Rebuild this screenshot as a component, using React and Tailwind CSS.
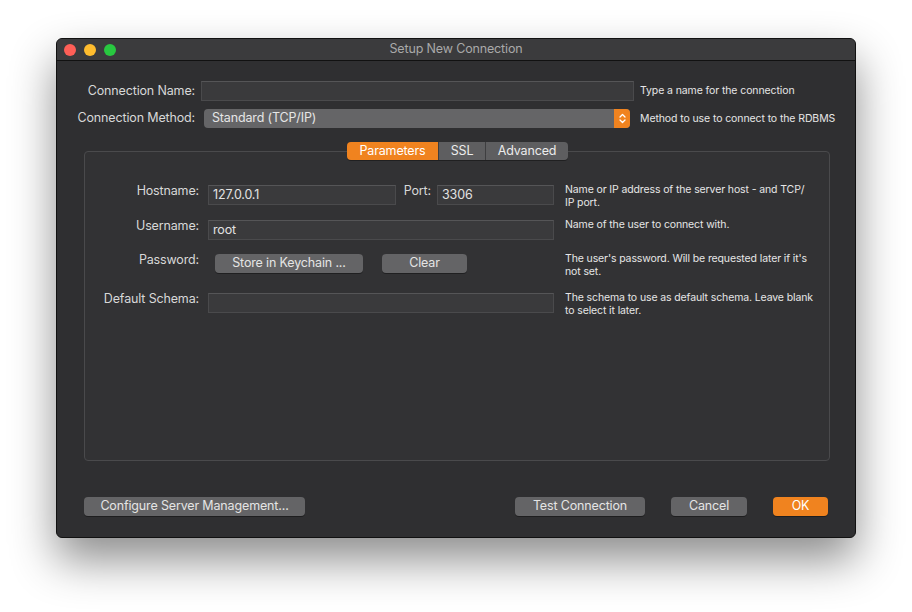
const Field = ({ className = "", value = "" }) => (
  <div
    className={`h-[20px] bg-[#3a3a3c] border border-[#4a4a4c] border-t-[#555557] flex items-center px-[4px] text-[12.5px] tracking-[-0.15px] text-[#e2e2e2] ${className}`}
  >
    {value}
  </div>
);

const Button = ({ children, className = "" }) => (
  <button
    className={`h-[19px] rounded-[4px] bg-[#646466] text-[12.5px] tracking-[-0.15px] leading-none text-[#e4e4e4] shadow-[0_1px_0_rgba(0,0,0,0.35)] flex items-center justify-center ${className}`}
  >
    {children}
  </button>
);

const Help = ({ children }) => (
  <div className="ml-[11px] w-[249px] -mt-[2px] text-[10.5px] tracking-[-0.12px] leading-[13px] text-[#e6e6e6]">
    {children}
  </div>
);

const Label = ({ children, className = "" }) => (
  <div className={`text-right text-[12.5px] tracking-[-0.15px] leading-[16px] text-[#d8d8d8] -mt-[2px] ${className}`}>
    {children}
  </div>
);

export default function App() {
  return (
    <div
      className="w-[912px] h-[612px] bg-white pt-[38px] pl-[56px]"
      style={{ fontFamily: "Inter, 'Noto Sans', sans-serif" }}
    >
      <div className="w-[800px] h-[500px] rounded-[6px] border border-[#111] bg-[#2f2f31] overflow-hidden shadow-[0_22px_45px_rgba(0,0,0,0.45)] flex flex-col">
        {/* Title bar */}
        <div className="h-[22px] flex-shrink-0 flex items-center bg-[#3b3b3d] border-b border-[#111]">
          <div className="flex items-center gap-[8px] pl-[7px]">
            <span className="w-[12px] h-[12px] rounded-full bg-[#fe5f57]" />
            <span className="w-[12px] h-[12px] rounded-full bg-[#febc2e]" />
            <span className="w-[12px] h-[12px] rounded-full bg-[#28c840]" />
          </div>
          <div className="flex-1 text-center text-[12.5px] tracking-[-0.15px] text-[#a9a9a9] pr-[59px]">
            Setup New Connection
          </div>
        </div>

        {/* Top rows */}
        <div className="pt-[20px] flex flex-col">
          <div className="flex items-center h-[20px]">
            <div className="w-[138px] text-right text-[12.5px] tracking-[-0.15px] text-[#d8d8d8]">Connection Name:</div>
            <Field className="ml-[6px] w-[433px]" />
            <div className="ml-[6px] text-[10.5px] tracking-[-0.1px] text-[#e6e6e6]">Type a name for the connection</div>
          </div>
          <div className="flex items-center h-[19px] mt-[8px]">
            <div className="w-[138px] text-right text-[12.5px] tracking-[-0.15px] text-[#d8d8d8]">Connection Method:</div>
            <div className="ml-[9px] w-[426px] h-[19px] rounded-[4px] bg-[#656567] flex items-center overflow-hidden">
              <span className="flex-1 pl-[8px] text-[12.5px] tracking-[-0.15px] text-[#e6e6e6]">Standard (TCP/IP)</span>
              <span className="w-[16px] h-full bg-[#f0831f] flex items-center justify-center">
                <svg width="9" height="13" viewBox="0 0 9 13" fill="none" stroke="#fff" strokeWidth="1.3" strokeLinecap="round" strokeLinejoin="round">
                  <path d="M2 5 L4.5 2.5 L7 5" />
                  <path d="M2 8 L4.5 10.5 L7 8" />
                </svg>
              </span>
            </div>
            <div className="ml-[10px] text-[10.5px] tracking-[-0.1px] text-[#e6e6e6]">Method to use to connect to the RDBMS</div>
          </div>
        </div>

        {/* Group box */}
        <div className="mt-[23px] ml-[27px] w-[746px] h-[310px] rounded-[4px] border border-[#4a4a4c] bg-[#323234] flex flex-col">
          <div className="flex justify-center -mt-[10px]">
            <div className="flex h-[18px] rounded-[4px] overflow-hidden text-[12.5px] tracking-[-0.15px] text-[#ececec] shadow-[0_1px_0_rgba(0,0,0,0.35)] ml-[1px]">
              <div className="w-[91px] bg-[#f0831f] text-white flex items-center justify-center">Parameters</div>
              <div className="w-[47px] bg-[#5e5e60] border-l border-[#3e3e40] flex items-center justify-center">SSL</div>
              <div className="w-[83px] bg-[#5e5e60] border-l border-[#3e3e40] flex items-center justify-center">Advanced</div>
            </div>
          </div>

          <div className="flex flex-col mt-[25px]">
            {/* Hostname */}
            <div className="flex items-start h-[20px]">
              <Label className="w-[114px]">Hostname:</Label>
              <div className="ml-[9px] w-[346px] flex items-start">
                <Field className="w-[188px]" value="127.0.0.1" />
                <Label className="ml-[7px] w-[28px] text-left">Port:</Label>
                <Field className="ml-[6px] w-[117px]" value="3306" />
              </div>
              <Help>Name or IP address of the server host - and TCP/ IP port.</Help>
            </div>

            {/* Username */}
            <div className="flex items-start h-[20px] mt-[15px]">
              <Label className="w-[114px]">Username:</Label>
              <Field className="ml-[9px] w-[346px]" value="root" />
              <Help>Name of the user to connect with.</Help>
            </div>

            {/* Password */}
            <div className="flex items-start h-[20px] mt-[14px]">
              <Label className="w-[114px]">Password:</Label>
              <div className="ml-[9px] w-[346px] flex items-start">
                <Button className="ml-[7px] w-[148px]">Store in Keychain ...</Button>
                <Button className="ml-[19px] w-[85px]">Clear</Button>
              </div>
              <Help>The user's password. Will be requested later if it's not set.</Help>
            </div>

            {/* Default Schema */}
            <div className="flex items-start h-[20px] mt-[19px]">
              <Label className="w-[114px]">Default Schema:</Label>
              <Field className="ml-[9px] w-[346px]" />
              <Help>The schema to use as default schema. Leave blank to select it later.</Help>
            </div>
          </div>
        </div>

        {/* Bottom buttons */}
        <div className="mt-[36px] flex items-center pl-[27px] pr-[27px]">
          <Button className="w-[221px]">Configure Server Management...</Button>
          <div className="flex-1" />
          <Button className="w-[130px]">Test Connection</Button>
          <Button className="ml-[26px] w-[76px]">Cancel</Button>
          <Button className="ml-[26px] w-[55px] bg-[#f0831f] text-white">OK</Button>
        </div>
      </div>
    </div>
  );
}
